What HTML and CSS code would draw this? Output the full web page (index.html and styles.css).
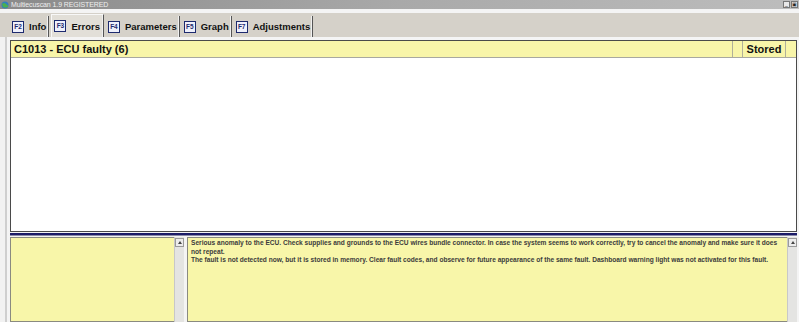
FILE: index.html
```html
<!DOCTYPE html>
<html lang="en">
<head>
  <meta charset="UTF-8">
  <title>Multiecuscan 1.9 REGISTERED</title>
  <link rel="stylesheet" href="styles.css">
</head>
<body>
<div class="window">
  <!-- Title bar -->
  <div class="titlebar">
    <svg class="app-icon" width="8" height="8" viewBox="0 0 8 8">
      <circle cx="4" cy="4" r="3.5" fill="#2f7fc0"/>
      <path d="M1 3 Q3 1 5 3 T7 4 L7 6 Q4 7 2 6 Z" fill="#4caf50"/>
    </svg>
    <span class="title-text">Multiecuscan 1.9 REGISTERED</span>
    <div class="win-buttons">
      <span class="win-btn">_</span>
      <span class="win-btn">&#9635;</span>
    </div>
  </div>
  <div class="strip"></div>

  <!-- Tabs -->
  <div class="tabbar">
    <div class="tab"><span class="fkey">F2</span>Info</div>
    <div class="tab active"><span class="fkey">F3</span>Errors</div>
    <div class="tab"><span class="fkey">F4</span>Parameters</div>
    <div class="tab"><span class="fkey">F5</span>Graph</div>
    <div class="tab"><span class="fkey">F7</span>Adjustments</div>
  </div>

  <!-- Content -->
  <div class="content">
    <div class="errors">
      <div class="err-header">
        <div class="col-name">C1013 - ECU faulty (6)</div>
        <div class="col-blank"></div>
        <div class="col-status">Stored</div>
        <div class="col-end"></div>
      </div>
      <div class="err-body"></div>
    </div>

    <div class="splitter"></div>

    <div class="details">
      <div class="panel left-panel"></div>
      <div class="scrollbar"><span class="arrow"></span></div>
      <div class="panel desc">
        <p>Serious anomaly to the ECU. Check supplies and grounds to the ECU wires bundle connector. In case the system seems to work correctly, try to cancel the anomaly and make sure it does not repeat.</p>
        <p>The fault is not detected now, but it is stored in memory. Clear fault codes, and observe for future appearance of the same fault. Dashboard warning light was not activated for this fault.</p>
      </div>
      <div class="scrollbar"><span class="arrow"></span></div>
    </div>
  </div>
</div>
</body>
</html>
```

FILE: styles.css
```css
/* General */
body {
  margin: 0;
  padding: 0;
  font-family: 'Liberation Sans', Arial, sans-serif;
  background: #f2f2f2;
  overflow: hidden;
}
.window {
  width: 799px;
  height: 322px;
  display: flex;
  flex-direction: column;
  overflow: hidden;
}
/* Title bar */
.titlebar {
  height: 9px;
  display: flex;
  align-items: center;
  background: linear-gradient(to right, #8a8a8a, #a9a9a9 50%, #bdbdbd);
  flex-shrink: 0;
}
.app-icon {
  margin-left: 1px;
}
.title-text {
  font-size: 7px;
  color: #eeeeee;
  margin-left: 2px;
  letter-spacing: -0.1px;
}
.win-buttons {
  margin-left: auto;
  display: flex;
  gap: 1px;
  margin-right: 1px;
}
.win-btn {
  width: 7px;
  height: 7px;
  background: #e8e8e8;
  border: 1px solid #777;
  box-sizing: border-box;
  font-size: 5px;
  line-height: 5px;
  text-align: center;
  color: #222;
}
.strip {
  height: 4px;
  background: #f4f4f4;
  flex-shrink: 0;
}
/* Tabs */
.tabbar {
  height: 24px;
  background: #d5d1c9;
  display: flex;
  align-items: flex-end;
  padding-left: 10px;
  flex-shrink: 0;
}
.tab {
  height: 21px;
  display: flex;
  align-items: center;
  padding: 0 2px 0 2px;
  font-size: 9.5px;
  font-weight: bold;
  color: #111;
  border-right: 1px solid #555;
  box-shadow: inset -1px 0 0 #f0f0f0;
  margin-right: 2px;
}
.tab.active {
  background: #e2dfd8;
  height: 23px;
  border-top: 1px solid #f8f8f8;
  border-left: 1px solid #f8f8f8;
  box-sizing: border-box;
  padding-right: 3px;
}
.fkey {
  width: 12px;
  height: 12px;
  box-sizing: border-box;
  border: 1px solid #1d2a6e;
  background: #eef0fb;
  color: #1d2a6e;
  font-size: 6.5px;
  font-weight: bold;
  line-height: 10px;
  text-align: center;
  margin-right: 5px;
}
/* Content */
.content {
  flex: 1;
  background: #f4f4f4;
  border-left: 2px solid #cfcfcf;
  margin-left: 5px;
  padding: 3px 2px 0 3px;
  display: flex;
  flex-direction: column;
  min-height: 0;
}
.errors {
  height: 190px;
  border: 1px solid #4a4a4a;
  background: #ffffff;
  display: flex;
  flex-direction: column;
  flex-shrink: 0;
}
.err-header {
  height: 16px;
  display: flex;
  background: #f8f5a9;
  border-bottom: 1px solid #a8a8a0;
  font-size: 11px;
  font-weight: bold;
  color: #111;
  line-height: 16px;
}
.col-name {
  flex: 1;
  padding-left: 3px;
}
.col-blank {
  width: 9px;
  border-left: 1px solid #b0b09a;
}
.col-status {
  width: 42px;
  border-left: 1px solid #b0b09a;
  text-align: center;
}
.col-end {
  width: 10px;
  border-left: 1px solid #b0b09a;
}
.err-body {
  flex: 1;
}
.splitter {
  height: 2px;
  margin: 1px 0 1px 0;
  background: #1b1b68;
  border-bottom: 1px solid #8a8aa8;
  flex-shrink: 0;
}
/* Details */
.details {
  flex: 1;
  display: flex;
  min-height: 0;
}
.panel {
  background: #f8f6a9;
  border: 1px solid #8a8a80;
  border-right: none;
}
.left-panel {
  width: 163px;
}
.scrollbar {
  width: 10px;
  background: #e4e4e2;
  border-left: 1px solid #c8c8c8;
  box-sizing: border-box;
  position: relative;
}
.arrow {
  position: absolute;
  top: 1px;
  left: 0;
  width: 9px;
  height: 9px;
  background: #ececec;
  border: 1px solid #9a9a9a;
  box-sizing: border-box;
}
.arrow::after {
  content: "";
  position: absolute;
  left: 2px;
  top: 2px;
  border-left: 2px solid transparent;
  border-right: 2px solid transparent;
  border-bottom: 3px solid #444;
}
.desc {
  flex: 1;
  margin-left: 3px;
  padding: 1px 1px 1px 3px;
  font-size: 6.6px;
  font-weight: bold;
  color: #3c3c3c;
  line-height: 8.5px;
}
.desc p {
  margin: 0;
}
```
